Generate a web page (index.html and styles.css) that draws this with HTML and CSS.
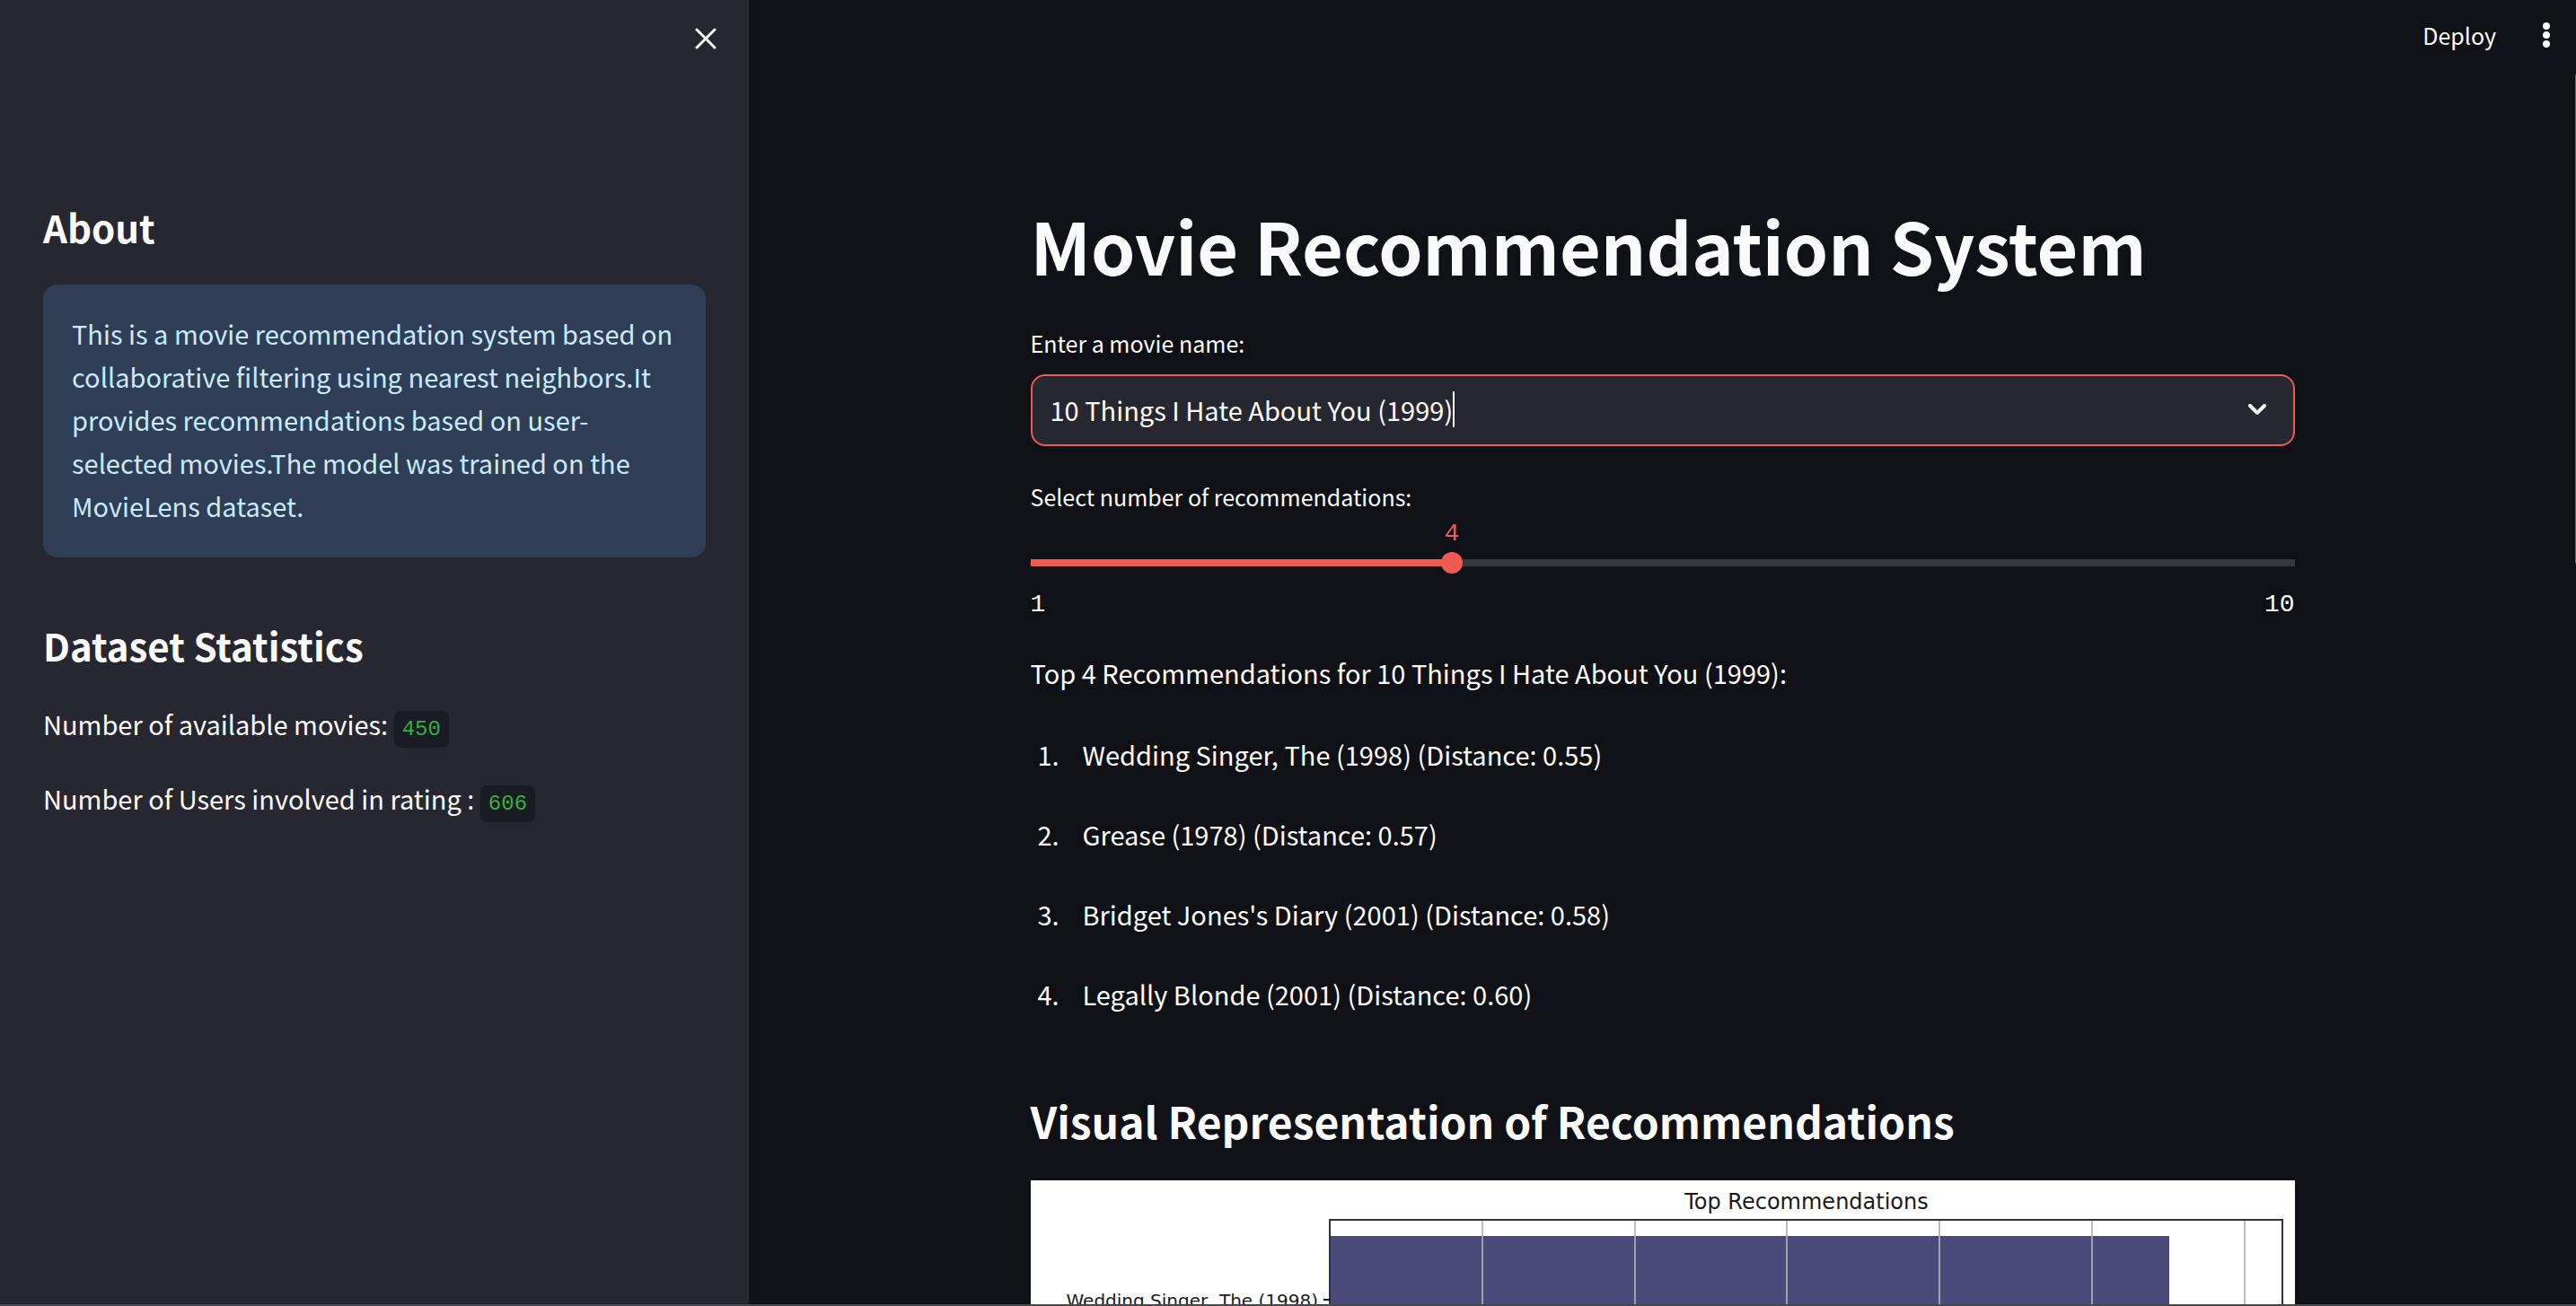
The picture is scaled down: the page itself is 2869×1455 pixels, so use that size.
FILE: index.html
```html
<!DOCTYPE html>
<html lang="en">
<head>
<meta charset="utf-8">
<title>Movie Recommendation System</title>
<link rel="stylesheet" href="styles.css">
</head>
<body>
<div class="app">
  <aside class="sidebar">
    <div class="sidebar-header">
      <button class="icon-button" type="button" aria-label="Close sidebar">
        <svg width="24" height="24" viewBox="0 0 24 24" aria-hidden="true"><path d="M2 2 22 22M22 2 2 22" fill="none" stroke="currentColor" stroke-width="3" stroke-linecap="round"/></svg>
      </button>
    </div>
    <section class="about">
      <h2 class="side-title">About</h2>
      <p class="info">This is a movie recommendation system based on collaborative filtering using nearest neighbors.It provides recommendations based on user-selected movies.The model was trained on the MovieLens dataset.</p>
    </section>
    <section class="stats">
      <h2 class="side-title">Dataset Statistics</h2>
      <p class="stat">Number of available movies: <code class="badge">450</code></p>
      <p class="stat">Number of Users involved in rating : <code class="badge">606</code></p>
    </section>
  </aside>

  <div class="page">
    <header class="toolbar">
      <button class="deploy" type="button">Deploy</button>
      <button class="icon-button" type="button" aria-label="Main menu">
        <svg width="8" height="28" viewBox="0 0 8 28" aria-hidden="true" fill="currentColor"><circle cx="4" cy="4" r="4"/><circle cx="4" cy="14" r="4"/><circle cx="4" cy="24" r="4"/></svg>
      </button>
    </header>

    <main class="content">
      <h1 class="title">Movie Recommendation System</h1>

      <label class="label" for="movie">Enter a movie name:</label>
      <div class="select">
        <input class="select-input" id="movie" type="text" role="combobox" aria-expanded="false" value="10 Things I Hate About You (1999)">
        <span class="caret"></span>
        <svg class="chevron" width="20" height="12" viewBox="0 0 20 12" aria-hidden="true"><path d="M2 2 10 10 18 2" fill="none" stroke="currentColor" stroke-width="4" stroke-linecap="round"/></svg>
      </div>

      <label class="label" for="count">Select number of recommendations:</label>
      <div class="slider">
        <output class="slider-value" for="count" style="left: 33.333%">4</output>
        <input class="slider-input" id="count" type="range" min="1" max="10" value="4">
        <div class="slider-range"><span>1</span><span>10</span></div>
      </div>

      <p class="lead">Top 4 Recommendations for 10 Things I Hate About You (1999):</p>
      <ol class="results">
        <li class="result">Wedding Singer, The (1998) (Distance: 0.55)</li>
        <li class="result">Grease (1978) (Distance: 0.57)</li>
        <li class="result">Bridget Jones's Diary (2001) (Distance: 0.58)</li>
        <li class="result">Legally Blonde (2001) (Distance: 0.60)</li>
      </ol>

      <h2 class="section-title">Visual Representation of Recommendations</h2>
      <svg class="chart" viewBox="0 0 1408 240" role="img" aria-label="Top Recommendations bar chart">
        <rect width="1408" height="240" fill="#fff"/>
        <text class="chart-title" x="864" y="32" text-anchor="middle">Top Recommendations</text>
        <rect x="333" y="62" width="935" height="178" fill="#4b4b7b"/>
        <path d="M503 44V240M673 44V240M842 44V240M1012 44V240M1182 44V240M1352 44V240" stroke="#b0b0b0" stroke-width="2" fill="none" opacity=".85"/>
        <path d="M333 240V44H1394V240" stroke="#333" stroke-width="2" fill="none"/>
        <path d="M326 133H333" stroke="#111" stroke-width="2"/>
        <text class="chart-label" x="320" y="141" text-anchor="end">Wedding Singer, The (1998)</text>
      </svg>
    </main>
  </div>
  <div class="scroll-thumb"></div>
</div>
</body>
</html>
```
FILE: styles.css
```css
* {
  box-sizing: border-box;
}

body {
  margin: 0;
  background: #0f1116;
  color: #fafafa;
  font: 29px/48px "Noto Sans CJK SC", "Noto Sans", sans-serif;
}

h1, h2, p, ol {
  margin: 0;
}

button, input {
  font: inherit;
  color: inherit;
  border: 0;
  padding: 0;
  background: none;
}

.app {
  position: relative;
  display: flex;
  height: 100vh;
  overflow: hidden;
  border-bottom: 2px solid #46484c;
}

.sidebar {
  flex: 0 0 834px;
  padding: 0 48px;
  background: #262730;
}

.sidebar-header {
  display: flex;
  justify-content: flex-end;
  align-items: center;
  height: 86px;
  margin: 0 -12px 139px 0;
}

.icon-button {
  display: flex;
  align-items: center;
  justify-content: center;
  min-width: 24px;
  height: 40px;
}

.side-title {
  font-size: 42px;
  line-height: 56px;
  font-weight: 600;
}

.info {
  margin-top: 36px;
  padding: 30px 32px 34px;
  border-radius: 16px;
  background: #2f3d55;
  color: #c7ebff;
}

.stats {
  margin-top: 70px;
}

.stat {
  margin-top: 35px;
}

.badge {
  padding: 7px 9px;
  border-radius: 8px;
  background: #1a1c24;
  color: #3dab42;
  font-family: "Liberation Mono", monospace;
  font-size: 24px;
  line-height: 1;
}

.page {
  flex: 1;
  overflow: hidden;
}

.toolbar {
  display: flex;
  justify-content: flex-end;
  align-items: center;
  gap: 44px;
  height: 78px;
  padding-right: 21px;
  font-size: 25px;
}

.content {
  max-width: 1408px;
  margin: 0 auto;
  padding-top: 142px;
}

.title {
  font-size: 79px;
  line-height: 106px;
  font-weight: 700;
}

.label {
  display: block;
  margin-top: 36px;
  font-size: 25px;
  line-height: 40px;
}

.select {
  display: flex;
  align-items: center;
  height: 80px;
  margin-top: 15px;
  padding: 0 30px 2px 20px;
  border: 2px solid #ee5a52;
  border-radius: 16px;
  background: #262730;
}

.select-input {
  field-sizing: content;
  height: 48px;
  outline: 0;
}

.caret {
  width: 2px;
  height: 40px;
  background: #fafafa;
}

.chevron {
  margin-left: auto;
}

.slider {
  position: relative;
  margin-top: 2px;
  padding-top: 40px;
  font-family: "Liberation Mono", monospace;
  font-size: 28px;
  line-height: 40px;
}

.slider-value {
  position: absolute;
  top: 0;
  transform: translateX(-50%);
  color: #ee5a52;
}

.slider-input {
  appearance: none;
  display: block;
  width: calc(100% + 24px);
  height: 24px;
  margin: 0 -12px;
  background: linear-gradient(90deg, #ee5a52 33.333%, #35383f 33.333%) center / calc(100% - 24px) 8px no-repeat;
}

.slider-input::-webkit-slider-thumb {
  appearance: none;
  width: 24px;
  height: 24px;
  border-radius: 50%;
  background: #ee5a52;
}

.slider-range {
  display: flex;
  justify-content: space-between;
  margin-top: 15px;
}

.lead {
  margin-top: 31px;
}

.results {
  display: flex;
  flex-direction: column;
  gap: 41px;
  margin-top: 43px;
  padding-left: 8px;
  list-style: none;
  counter-reset: result;
}

.result {
  display: flex;
  counter-increment: result;
}

.result::before {
  content: counter(result) ".";
  flex: 0 0 50px;
}

.section-title {
  margin-top: 83px;
  font-size: 48px;
  line-height: 68px;
  font-weight: 600;
}

.chart {
  display: block;
  width: 100%;
  margin-top: 33px;
}

.chart-title, .chart-label {
  font-family: "DejaVu Sans", sans-serif;
  fill: #1a1a1a;
}

.chart-title {
  font-size: 24px;
}

.chart-label {
  font-size: 20px;
}

.scroll-thumb {
  position: absolute;
  top: 83px;
  right: 0;
  width: 1px;
  height: 544px;
  background: #6b6c70;
}
```
